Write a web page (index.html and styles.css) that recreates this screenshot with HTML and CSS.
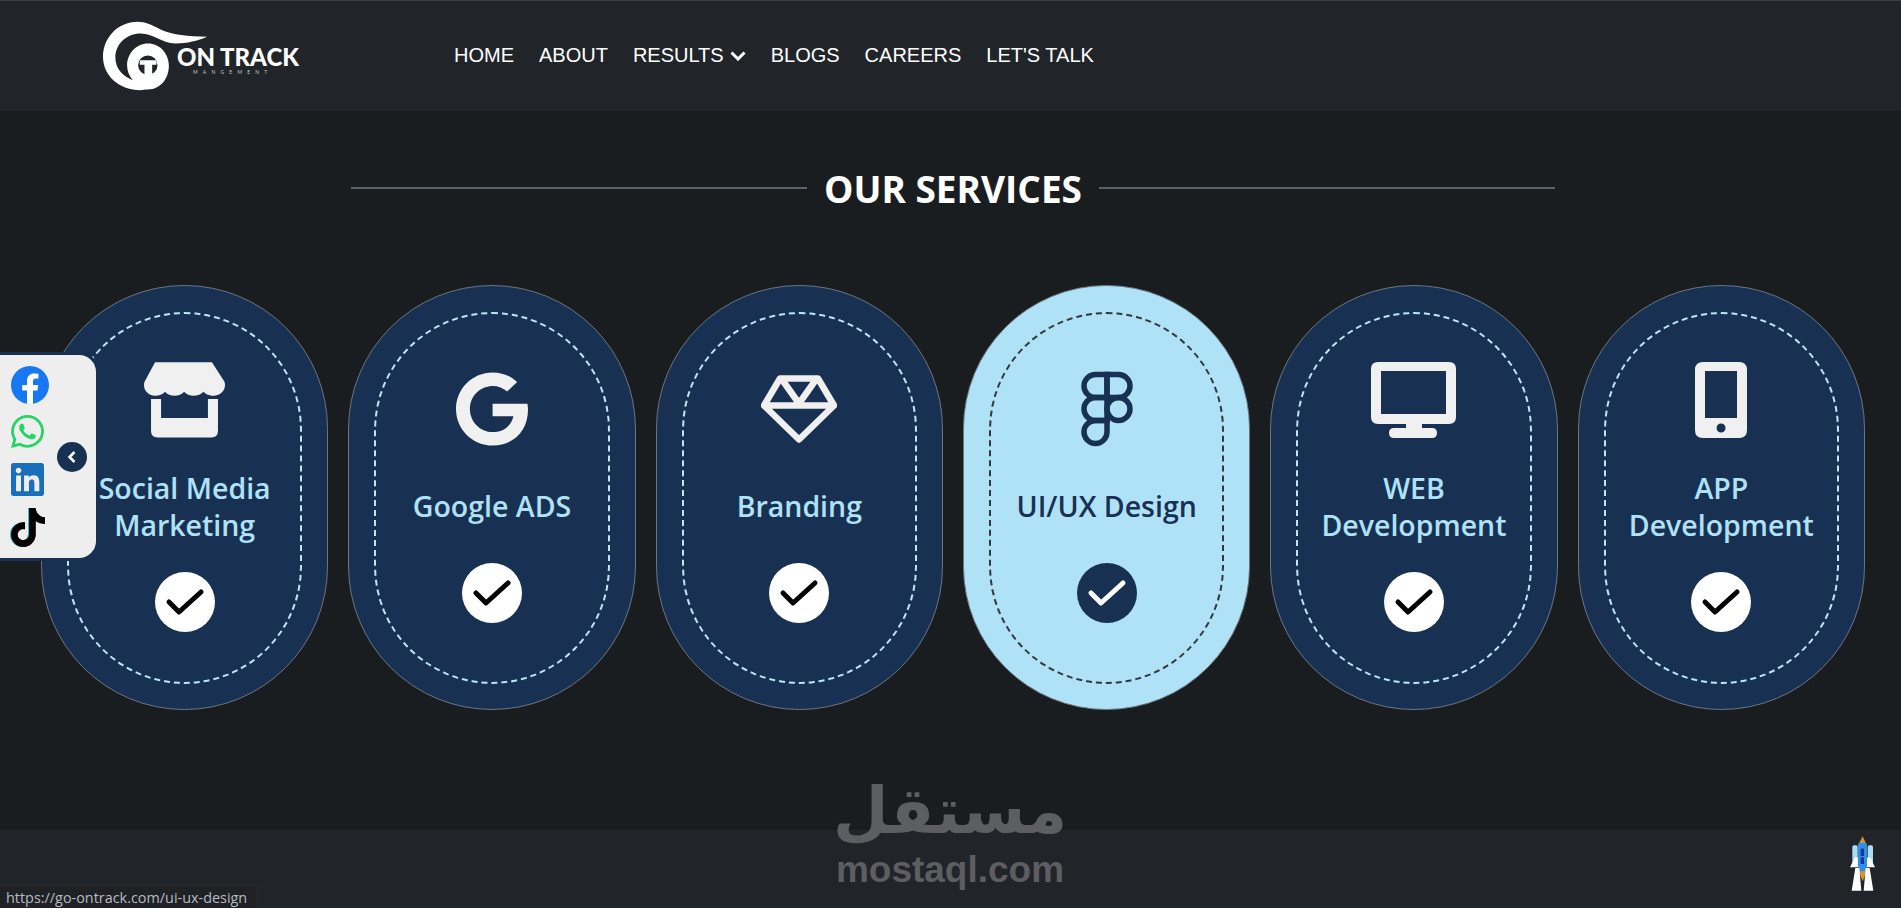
FILE: index.html
```html
<!DOCTYPE html>
<html lang="en">
<head>
  <meta charset="UTF-8">
  <title>On Track Management - Our Services</title>
  <link rel="stylesheet" href="styles.css">
</head>
<body>
  <header class="topbar">
    <a class="logo" href="#">
      <svg class="logo-mark" viewBox="125 60 320 215">
        <path fill-rule="evenodd" d="M440 110C380 108 340 105 300 88C275 75 255 65 232 65C170 65 128 115 128 170C128 228 178 270 240 270C246 270 254 268 262 268C300 268 325 235 325 197C325 160 298 130 262 130C228 130 200 160 200 195C200 212 207 228 217 240C187 228 165 205 165 172C165 130 200 100 240 100C280 100 300 128 345 130C380 130 410 122 440 110ZM262 166A29 29 0 1 0 262.1 224A29 29 0 1 0 262 166Z"/>
        <path d="M238 180H288V194H275V224H252V194H238Z"/>
      </svg>
      <span class="logo-text">
        <strong>ON TRACK</strong>
        <small>MANGEMENT</small>
      </span>
    </a>
    <nav class="nav">
      <a href="#">HOME</a>
      <a href="#">ABOUT</a>
      <a href="#" class="has-menu">RESULTS
        <svg class="nav-arrow" viewBox="0 0 16 10"><path d="M1.500 1.500L8 8l6.500-6.500"/></svg>
      </a>
      <a href="#">BLOGS</a>
      <a href="#">CAREERS</a>
      <a href="#">LET'S TALK</a>
    </nav>
  </header>

  <main class="services">
    <div class="section-title">
      <span class="rule"></span>
      <h2>OUR SERVICES</h2>
      <span class="rule"></span>
    </div>

    <div class="cards">
      <a class="card" href="#">
        <svg class="icon icon-store" viewBox="432 250 242 226">
          <path d="M465 250H635L672 308Q674 312 674 318C674 340 655 350 640 350C628 350 615 345 610 338C600 348 590 350 580 350C570 350 558 346 552 338C545 346 535 350 524 350C512 350 500 346 495 338C488 346 478 350 465 350C448 350 432 338 432 318Q432 312 434 308Z"/>
          <path d="M453 360H483V417H623V360H653V455Q653 475 633 475H473Q453 475 453 455Z"/>
        </svg>
        <h3>Social Media Marketing</h3>
        <span class="check"><svg viewBox="0 0 60 60"><path d="M14 30l10 10 22-20"/></svg></span>
      </a>

      <a class="card" href="#">
        <svg class="icon icon-google" viewBox="0 8 488 496">
          <path d="M488 261.8C488 403.3 391.1 504 248 504 110.8 504 0 393.2 0 256S110.8 8 248 8c66.8 0 123 24.5 166.3 64.9l-67.5 64.9C258.5 52.6 94.3 116.6 94.3 256c0 86.5 69.1 156.6 153.7 156.6 98.2 0 135-70.4 140.8-106.9H248v-85.3h236.1c2.3 12.7 3.9 24.9 3.9 41.4z"/>
        </svg>
        <h3>Google ADS</h3>
        <span class="check"><svg viewBox="0 0 60 60"><path d="M14 30l10 10 22-20"/></svg></span>
      </a>

      <a class="card" href="#">
        <svg class="icon icon-diamond" viewBox="0 0 76 67">
          <path d="M19 3H57L73 30L38 64L3 30Z M3 30H73 M21 4L38 28L55 4"/>
        </svg>
        <h3>Branding</h3>
        <span class="check"><svg viewBox="0 0 60 60"><path d="M14 30l10 10 22-20"/></svg></span>
      </a>

      <a class="card active" href="#">
        <svg class="icon icon-figma" viewBox="0 0 52 75">
          <path d="M26 3H14.5a11.5 11.5 0 0 0 0 23H26Z"/>
          <path d="M26 3H37.5a11.5 11.5 0 0 1 0 23H26Z"/>
          <path d="M26 26H14.5a11.5 11.5 0 0 0 0 23H26Z"/>
          <circle cx="37.5" cy="37.5" r="11.5"/>
          <path d="M26 49H14.5a11.5 11.5 0 1 0 11.5 11.5Z"/>
        </svg>
        <h3>UI/UX Design</h3>
        <span class="check"><svg viewBox="0 0 60 60"><path d="M14 30l10 10 22-20"/></svg></span>
      </a>

      <a class="card" href="#">
        <svg class="icon icon-monitor" viewBox="0 0 85 76">
          <path fill-rule="evenodd" d="M7 0H78Q85 0 85 7V55Q85 62 78 62H7Q0 62 0 55V7Q0 0 7 0ZM10 9V52H75V9Z"/>
          <path d="M35 61H51V66H61Q66 66 66 71T61 76H23Q18 76 18 71T23 66H35Z"/>
        </svg>
        <h3>WEB Development</h3>
        <span class="check"><svg viewBox="0 0 60 60"><path d="M14 30l10 10 22-20"/></svg></span>
      </a>

      <a class="card" href="#">
        <svg class="icon icon-phone" viewBox="0 0 52 76">
          <path fill-rule="evenodd" d="M8 0H44Q52 0 52 8V68Q52 76 44 76H8Q0 76 0 68V8Q0 0 8 0ZM10 9V56H42V9ZM26 61.500A4.500 4.500 0 1 0 26.100 70.500A4.500 4.500 0 1 0 26 61.500Z"/>
        </svg>
        <h3>APP Development</h3>
        <span class="check"><svg viewBox="0 0 60 60"><path d="M14 30l10 10 22-20"/></svg></span>
      </a>
    </div>
  </main>

  <footer class="footer"></footer>

  <!-- social side panel -->
  <aside class="social">
    <a href="#" class="soc-fb">
      <svg viewBox="8 8 496 496"><circle cx="256" cy="256" r="235" fill="#fff"/><path fill="#1877f2" d="M504 256C504 119 393 8 256 8S8 119 8 256c0 123.780 90.690 226.380 209.250 245V327.690h-63V256h63v-54.640c0-62.150 37-96.480 93.670-96.480 27.140 0 55.520 4.840 55.520 4.840v61h-31.280c-30.800 0-40.410 19.120-40.410 38.730V256h68.780l-11 71.690h-57.780V501C413.310 482.380 504 379.780 504 256z"/></svg>
    </a>
    <a href="#" class="soc-wa">
      <svg viewBox="0 32 448 448"><path fill="#25d366" d="M380.900 97.100C339 55.100 283.200 32 223.900 32c-122.400 0-222 99.600-222 222 0 39.100 10.200 77.300 29.600 111L0 480l117.700-30.900c32.400 17.700 68.900 27 106.100 27h.1c122.300 0 224.100-99.600 224.100-222 0-59.300-25.200-115-67.100-157zm-157 341.600c-33.200 0-65.700-8.900-94-25.700l-6.700-4-69.800 18.300L72 359.200l-4.400-7c-18.500-29.400-28.200-63.300-28.200-98.200 0-101.700 82.800-184.500 184.600-184.500 49.300 0 95.600 19.200 130.400 54.100 34.800 34.900 56.200 81.200 56.100 130.500 0 101.800-84.900 184.600-186.600 184.600zm101.200-138.200c-5.500-2.800-32.800-16.200-37.900-18-5.100-1.900-8.800-2.800-12.500 2.800-3.700 5.600-14.300 18-17.600 21.800-3.200 3.700-6.500 4.200-12 1.400-32.600-16.300-54-29.100-75.500-66-5.700-9.800 5.700-9.100 16.300-30.300 1.800-3.700.9-6.900-.5-9.700-1.400-2.800-12.500-30.100-17.100-41.200-4.500-10.800-9.100-9.300-12.500-9.500-3.200-.2-6.900-.2-10.600-.2-3.700 0-9.700 1.400-14.800 6.900-5.100 5.600-19.400 19-19.400 46.300 0 27.300 19.900 53.700 22.600 57.400 2.800 3.700 39.100 59.700 94.800 83.800 35.200 15.200 49 16.500 66.600 13.900 10.700-1.600 32.800-13.400 37.400-26.400 4.600-13 4.600-24.100 3.200-26.400-1.300-2.500-5-3.900-10.500-6.600z"/></svg>
    </a>
    <a href="#" class="soc-in">
      <svg viewBox="0 32 448 448"><path fill="#1a6fbd" d="M416 32H31.900C14.300 32 0 46.500 0 64.300v383.400C0 465.500 14.300 480 31.900 480H416c17.600 0 32-14.500 32-32.300V64.300c0-17.800-14.400-32.300-32-32.300zM135.400 416H69V202.200h66.500V416zm-33.200-243c-21.300 0-38.500-17.300-38.500-38.500S80.900 96 102.200 96c21.200 0 38.500 17.300 38.500 38.500 0 21.300-17.200 38.500-38.500 38.500zm282.100 243h-66.400V312c0-24.800-.5-56.700-34.500-56.700-34.600 0-39.900 27-39.900 54.900V416h-66.400V202.200h63.700v29.200h.9c8.900-16.800 30.600-34.500 62.900-34.500 67.200 0 79.700 44.300 79.700 101.900V416z"/></svg>
    </a>
    <a href="#" class="soc-tt">
      <svg viewBox="0 0 448 512"><path d="M448 209.910a210.060 210.060 0 0 1-122.770-39.250V349.380A162.550 162.550 0 1 1 185 188.310V278.200a74.620 74.620 0 1 0 52.230 71.180V0l88 0a121.180 121.180 0 0 0 1.860 22.170h0A122.180 122.180 0 0 0 381 102.390a121.430 121.430 0 0 0 67 20.140Z"/></svg>
    </a>
    <button class="social-toggle" type="button">
      <svg viewBox="0 0 10 14"><path d="M7.500 2L2.500 7l5 5"/></svg>
    </button>
  </aside>

  <!-- watermark over the page -->
  <div class="watermark">
    <span class="wm-ar" lang="ar" dir="rtl">مستقل</span>
    <span class="wm-en">mostaql.com</span>
  </div>

  <svg class="rocket" viewBox="150 85 75 163">
    <path fill="#d9922e" d="M188 85L200 110V190L188 220L175 190V110Z"/>
    <rect x="157" y="112" width="16" height="65" rx="5" fill="#a9dcf5"/>
    <rect x="203" y="112" width="16" height="65" rx="5" fill="#a9dcf5"/>
    <path fill="#fff" d="M165 148L150 178H183V150ZM210 148L225 178H193V150Z"/>
    <rect x="174" y="105" width="27" height="85" rx="6" fill="#2f8fe8"/>
    <rect x="182" y="122" width="10" height="22" fill="#16389a"/>
    <rect x="182" y="148" width="10" height="20" fill="#16389a"/>
    <path fill="#fff" d="M166 180H178L184 248H155ZM197 180H209L220 248H191Z"/>
  </svg>

  <div class="status-url">https://go-ontrack.com/ui-ux-design</div>
</body>
</html>
```

FILE: styles.css
```css
* { box-sizing: border-box; }

html, body { height: 100%; }

body {
  margin: 0;
  overflow: hidden;
  display: flex;
  flex-direction: column;
  background-color: #1a1d20;
  color: #fff;
  font-family: 'Liberation Sans', Arial, sans-serif;
}

a { color: inherit; text-decoration: none; }

/* header */
.topbar {
  height: 111px;
  flex-shrink: 0;
  display: flex;
  align-items: center;
  padding-left: 102px;
  padding-bottom: 2px;
  background-color: #212529;
  border-top: 1px solid #3a3e42;
}
.logo {
  width: 352px;
  height: 72px;
  display: flex;
  margin-top: 2px;
}
.logo-mark {
  width: 107px;
  height: 72px;
  margin-right: -32px;
  flex-shrink: 0;
  fill: #fff;
}
.logo-text {
  display: flex;
  flex-direction: column;
  padding-top: 25px;
}
.logo-text strong {
  font-family: 'Lato', sans-serif;
  font-size: 24px;
  font-weight: 900;
  line-height: 24px;
  white-space: nowrap;
}
.logo-text small {
  font-family: 'Lato', sans-serif;
  font-size: 5px;
  line-height: 6px;
  letter-spacing: 5.200px;
  margin-left: 16px;
  color: #c4c9cd;
}
.nav {
  display: flex;
  align-items: center;
  gap: 25px;
  font-size: 20px;
}
.has-menu {
  display: flex;
  align-items: center;
  gap: 6px;
}
.nav-arrow {
  width: 16px;
  height: 10px;
  margin-top: 2px;
  fill: none;
  stroke: #fff;
  stroke-width: 3;
}

/* services */
.services {
  flex: 1;
  padding: 52px 36px 0 41px;
}
.section-title {
  width: 1204px;
  height: 50px;
  margin-left: 310px;
  display: flex;
  align-items: center;
  gap: 17px;
}
.section-title h2 {
  margin: 0;
  font-family: 'Open Sans', sans-serif;
  font-size: 37px;
  font-weight: 700;
  white-space: nowrap;
}
.rule {
  flex: 1;
  height: 2px;
  background-color: #566370;
}

.cards {
  margin-top: 72px;
  display: grid;
  grid-template-columns: repeat(6, 1fr);
  gap: 20px;
}
.card {
  position: relative;
  height: 425px;
  padding: 47px 0 48px;
  display: flex;
  flex-direction: column;
  align-items: center;
  justify-content: space-evenly;
  background-color: #183153;
  border: 1px solid #6c7680;
  border-radius: 150px;
  color: #b0e2f7;
}
.card::before {
  content: "";
  position: absolute;
  inset: 26px 25px 25px;
  border: 2px dashed #bde6f8;
  border-radius: 120px;
}
.card h3 {
  margin: 3px 0 0;
  width: 210px;
  font-family: 'Open Sans', sans-serif;
  font-size: 28.500px;
  font-weight: 600;
  line-height: 36.500px;
  text-align: center;
}
.card.active {
  background-color: #b0e2f7;
  color: #183153;
}
.card.active::before { border-color: #33383e; }

.icon {
  display: block;
  height: 76px;
  fill: #f0f0f0;
}
.icon-store { width: 81px; }
.icon-google { width: 72px; padding: 1px 0; }
.icon-diamond { width: 76px; padding: 4px 0; fill: none; stroke: #f0f0f0; stroke-width: 6.500; stroke-linejoin: round; }
.icon-figma { width: 52px; fill: none; stroke: #183153; stroke-width: 5.500; }
.icon-monitor { width: 85px; }
.icon-phone { width: 52px; }

.check {
  width: 60px;
  height: 60px;
  flex-shrink: 0;
  border-radius: 50%;
  background-color: #fff;
}
.check svg {
  display: block;
  fill: none;
  stroke: #000;
  stroke-width: 5;
  stroke-linecap: round;
  stroke-linejoin: round;
}
.card.active .check { background-color: #183153; }
.card.active .check svg { stroke: #fff; }

.footer {
  height: 78px;
  flex-shrink: 0;
  background-color: #212529;
}

/* side panel */
.social {
  position: absolute;
  left: -20px;
  top: 352px;
  width: 119px;
  height: 209px;
  padding: 11px 0 0 28px;
  display: flex;
  flex-direction: column;
  align-items: flex-start;
  background-color: #eee;
  border: 3px solid #183153;
  border-radius: 20px;
}
.social a { display: block; line-height: 0; }
.social svg { display: block; }
.soc-fb svg { width: 38px; height: 38px; }
.soc-wa { margin-top: 11px; }
.soc-wa svg { width: 33px; height: 33px; }
.soc-in { margin-top: 15px; }
.soc-in svg { width: 33px; height: 33px; }
.soc-tt { margin-top: 12px; }
.soc-tt svg {
  width: 34px;
  height: 39px;
  filter: drop-shadow(.6px 0 0 #e0274f) drop-shadow(-.6px 0 0 #25c8d8);
}
.social-toggle {
  position: absolute;
  left: 74px;
  top: 87px;
  width: 30px;
  height: 30px;
  padding: 0;
  display: flex;
  align-items: center;
  justify-content: center;
  background-color: #183153;
  border: 0;
  border-radius: 50%;
}
.social-toggle svg {
  width: 10px;
  height: 14px;
  fill: none;
  stroke: #fff;
  stroke-width: 2.500;
}

/* overlays */
.watermark {
  position: absolute;
  left: 837px;
  top: 778px;
  width: 226px;
  display: flex;
  flex-direction: column;
  align-items: center;
  gap: 6px;
  color: #5c5e61;
}
.wm-ar {
  font-family: 'DejaVu Sans', sans-serif;
  font-size: 64px;
  font-weight: 700;
  line-height: 66px;
  white-space: nowrap;
}
.wm-en {
  font-size: 37px;
  font-weight: 700;
  line-height: 40px;
  white-space: nowrap;
}

.rocket {
  position: absolute;
  left: 1850px;
  top: 836px;
  width: 25px;
  height: 55px;
}

.status-url {
  position: absolute;
  left: 0;
  bottom: 0;
  width: 258px;
  height: 23px;
  padding-left: 6px;
  font-family: 'Open Sans', sans-serif;
  font-size: 14.400px;
  line-height: 23px;
  color: #b4bcc4;
  background-color: #202124;
  border: 1px solid #2a2b2e;
  border-width: 1px 1px 0 0;
  border-top-right-radius: 4px;
  white-space: nowrap;
}
```
